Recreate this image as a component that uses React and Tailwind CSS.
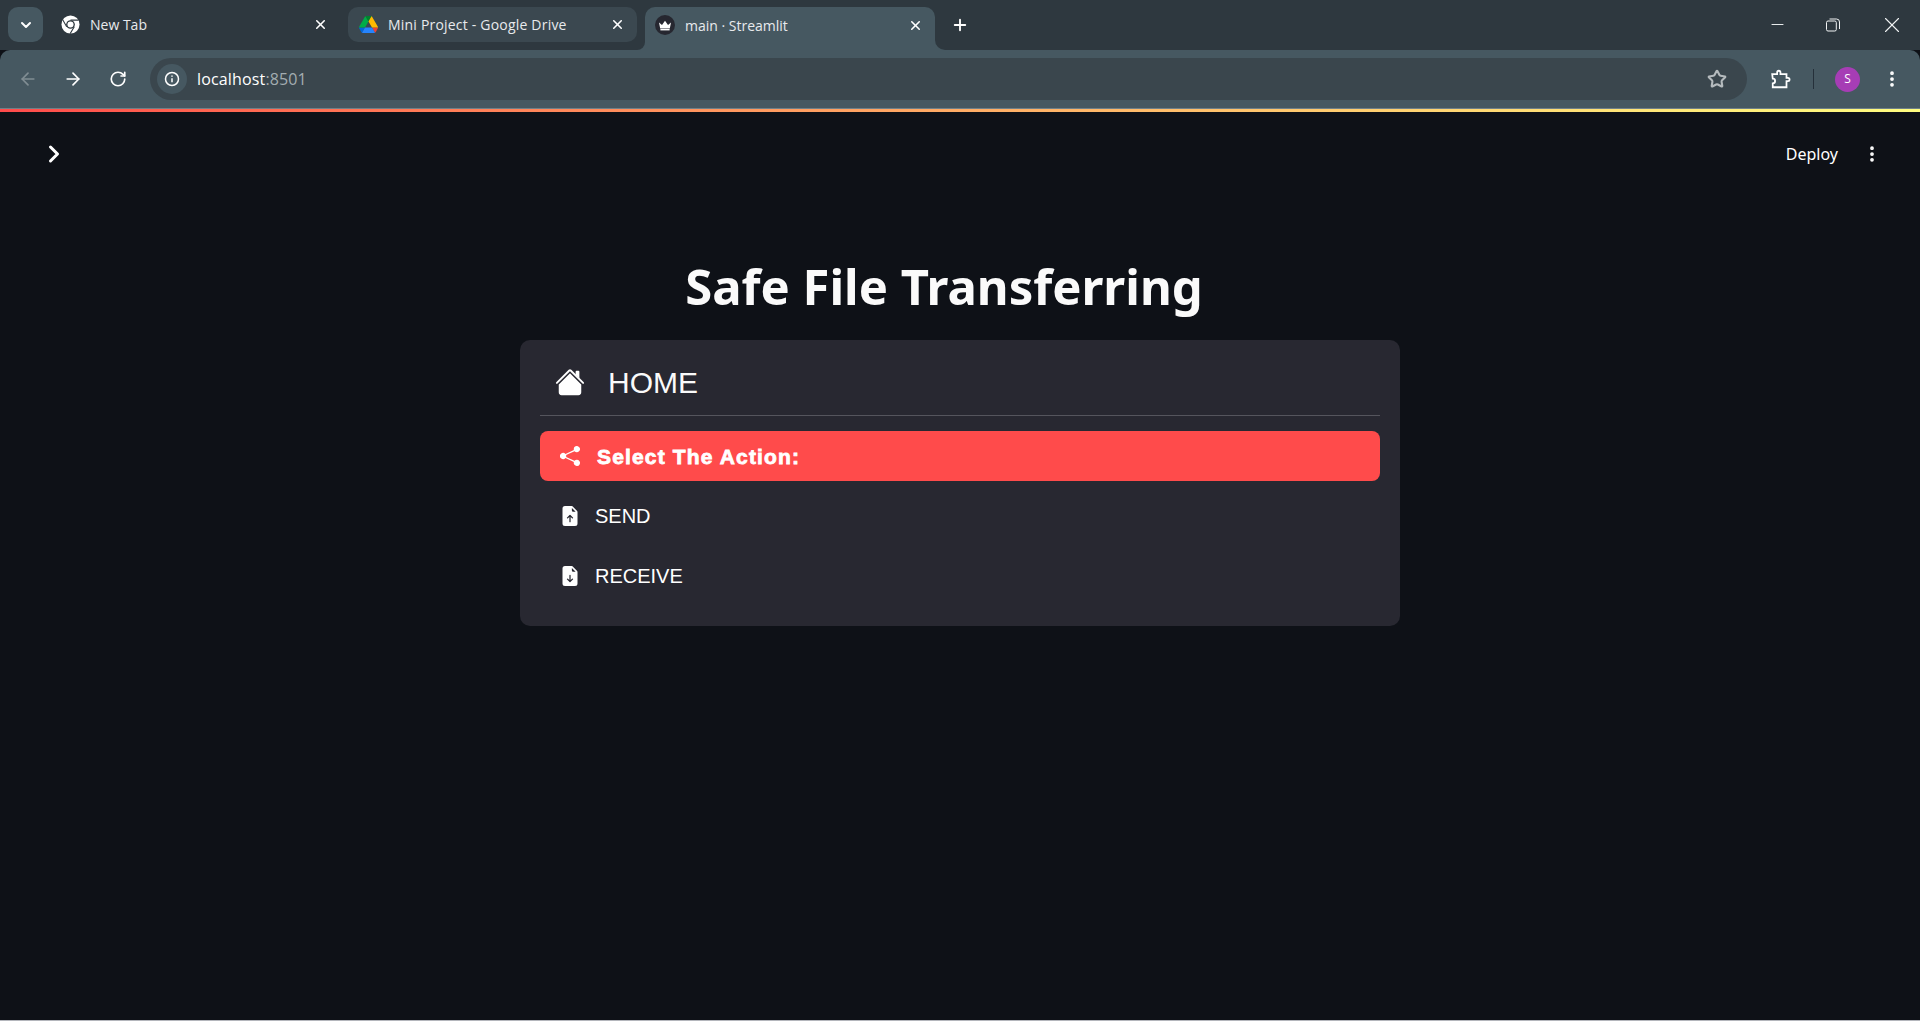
import React from "react";
import { X, Plus, ArrowLeft, ArrowRight, RotateCw, Star, ChevronRight, ChevronDown, Minus, EllipsisVertical } from "lucide-react";
import { BsShareFill, BsFileEarmarkArrowUpFill, BsFileEarmarkArrowDownFill } from "react-icons/bs";

const HouseIcon = () => (
  <svg viewBox="0 0 16 16" fill="currentColor" className="w-[30px] h-[30px]">
    <path fillRule="evenodd" d="M8 3.293l6 6V13.5a1.5 1.5 0 0 1-1.5 1.5h-9A1.5 1.5 0 0 1 2 13.5V9.293l6-6zm5-.793V6l-2-2V2.5a.5.5 0 0 1 .5-.5h1a.5.5 0 0 1 .5.5z" />
    <path fillRule="evenodd" d="M7.293 1.5a1 1 0 0 1 1.414 0l6.647 6.646a.5.5 0 0 1-.708.708L8 2.207 1.354 8.854a.5.5 0 1 1-.708-.708L7.293 1.5z" />
  </svg>
);

const ChromeIcon = () => (
  <svg viewBox="0 0 20 20" className="w-[19px] h-[19px]">
    <circle cx="10" cy="10" r="9.5" fill="#fff" />
    <circle cx="10" cy="10" r="4.6" fill="#2e383f" />
    <circle cx="10" cy="10" r="3.2" fill="#fff" />
    <path d="M10 5.4h8.6M6 12.3L1.8 5M14 12.3L9.6 19.6" stroke="#2e383f" strokeWidth="1.1" fill="none" />
  </svg>
);

const DriveIcon = () => (
  <svg viewBox="0 0 87.3 78" className="w-[19px] h-[17px]">
    <path d="M6.6 66.85l3.85 6.65c.8 1.4 1.95 2.5 3.3 3.3L27.5 53H0c0 1.55.4 3.1 1.2 4.5z" fill="#0066da" />
    <path d="M43.65 25L29.9 1.2c-1.35.8-2.5 1.9-3.3 3.3L1.2 48.5C.4 49.9 0 51.45 0 53h27.5z" fill="#00ac47" />
    <path d="M73.55 76.8c1.35-.8 2.5-1.9 3.3-3.3l1.6-2.75 7.65-13.25c.8-1.4 1.2-2.95 1.2-4.5H59.8l5.85 11.5z" fill="#ea4335" />
    <path d="M43.65 25L57.4 1.2C56.05.4 54.5 0 52.9 0H34.4c-1.6 0-3.15.45-4.5 1.2z" fill="#00832d" />
    <path d="M59.8 53H27.5L13.75 76.8c1.35.8 2.9 1.2 4.5 1.2h50.8c1.6 0 3.15-.45 4.5-1.2z" fill="#2684fc" />
    <path d="M73.4 26.5L60.7 4.5c-.8-1.4-1.95-2.5-3.3-3.3L43.65 25 59.8 53h27.45c0-1.55-.4-3.1-1.2-4.5z" fill="#ffba00" />
  </svg>
);

const CrownIcon = () => (
  <div className="w-5 h-5 rounded-full bg-[#262730] flex items-center justify-center">
    <svg viewBox="0 0 14 11" className="w-[14px] h-[11px]" fill="#fff">
      <path d="M1 2.5l3 2.5L7 .8 10 5l3-2.5-1.2 6H2.200z" />
      <rect x="2.4" y="9" width="9.2" height="1.4" />
    </svg>
  </div>
);

const PuzzleIcon = () => (
  <svg viewBox="0 0 20 20" className="w-[22px] h-[22px]" fill="none" stroke="#fff" strokeWidth="1.6">
    <path d="M2 5.500h4.500V4a1.500 1.500 0 0 1 3 0v1.500H15V9h1.300a1.500 1.500 0 0 1 0 3H15v5.500H2.500V14a2 2 0 0 0 0-4.300z" />
  </svg>
);

const RestoreIcon = () => (
  <svg viewBox="0 0 14 14" className="w-[14px] h-[14px]" fill="none" stroke="#f1f3f4" strokeWidth="1">
    <rect x="0.500" y="3" width="9.800" height="10" rx="1.500" />
    <path d="M3.500 1h7a3 3 0 0 1 3 3v7" />
  </svg>
);

function InactiveTab({ width, icon, title, className = "", titleClassName = "" }) {
  return (
    <div className={`flex items-center h-[35px] rounded-[10px] pl-[11px] pr-[12px] ${className}`} style={{ width }}>
      <div className="w-[19px] flex justify-center shrink-0">{icon}</div>
      <span className={`ml-[10px] flex-1 text-[14px] text-[#e8eaed] whitespace-nowrap ${titleClassName}`}>{title}</span>
      <X size={15} strokeWidth={2.5} className="text-white shrink-0" />
    </div>
  );
}

function OptionRow({ icon, label }) {
  return (
    <div className="h-[50px] flex items-center pl-[22px] text-[20px] text-white">
      <span className="w-[16px] flex justify-center">{icon}</span>
      <span className="ml-[17px]">{label}</span>
    </div>
  );
}

export default function App() {
  return (
    <div className="h-[1021px] overflow-hidden flex flex-col bg-[#0e1117] font-['Open_Sans',sans-serif]">
      {/* Tab strip */}
      <div className="h-[50px] bg-[#465861] shrink-0">
        <div className="h-full bg-[#2e383f] flex items-start pt-[7px] pl-[8px]">
          <div className="w-[35px] h-[35px] rounded-[10px] bg-[#465861] flex items-center justify-center">
            <ChevronDown size={16} strokeWidth={3} className="text-white" />
          </div>
          <InactiveTab width={290} className="ml-[7px] mr-[8px]" icon={<ChromeIcon />} title="New Tab" />
          <InactiveTab width={289} className="bg-[#3b4850]" icon={<DriveIcon />} title="Mini Project - Google Drive" titleClassName="tracking-[0.2px]" />
          <div className="relative ml-[8px] w-[290px] h-[43px] bg-[#465861] rounded-t-[10px] flex items-center pl-[10px] pr-[12px] pb-[7px]">
            {/* flared bottom corners */}
            <div className="absolute left-[-8px] bottom-0 w-2 h-2 bg-[#465861]">
              <div className="w-full h-full bg-[#2e383f] rounded-br-[8px]" />
            </div>
            <div className="absolute right-[-10px] bottom-0 w-[10px] h-[10px] bg-[#465861]">
              <div className="w-full h-full bg-[#2e383f] rounded-bl-[10px]" />
            </div>
            <CrownIcon />
            <span className="ml-[10px] flex-1 text-[14px] text-[#e8eaed] whitespace-nowrap">main · Streamlit</span>
            <X size={15} strokeWidth={2.5} className="text-white" />
          </div>
          <Plus size={18} strokeWidth={2.5} className="text-white ml-[16px] mt-[9px]" />
          <div className="flex-1" />
          <div className="flex items-center h-[35px] text-[#f1f3f4]">
            <Minus size={19} strokeWidth={1.2} className="mr-[39px]" />
            <div className="mr-[39px]"><RestoreIcon /></div>
            <X size={26} strokeWidth={1} className="mr-[15px]" />
          </div>
        </div>
      </div>

      {/* Toolbar */}
      <div className="h-[58px] bg-[#465861] shrink-0 flex items-center rounded-t-[10px] pl-[18px] pr-[16px]">
        <ArrowLeft size={20} className="text-[#808d93]" />
        <ArrowRight size={20} className="text-white ml-[25px]" />
        <RotateCw size={18} strokeWidth={2.200} className="text-white ml-[26px]" />
        <div className="ml-[23px] w-[1597px] h-[42px] rounded-full bg-[#3a464d] flex items-center pl-[7px] pr-[20px]">
          <div className="w-[30px] h-[30px] rounded-full bg-[#465861] flex items-center justify-center">
            <svg viewBox="0 0 16 16" className="w-4 h-4" fill="none" stroke="#fff" strokeWidth="1.500">
              <circle cx="8" cy="8" r="6.500" />
              <path d="M8 7.200v4M8 4.400v1.400" />
            </svg>
          </div>
          <span className="ml-[10px] flex-1 text-[16px] leading-none text-white tracking-[0.15px]">
            localhost<span className="text-[#a3adb1]">:8501</span>
          </span>
          <Star size={20} strokeWidth={2.5} className="text-[#b5bbbe]" />
        </div>
        <div className="ml-[23px]"><PuzzleIcon /></div>
        <div className="ml-[21px] w-px h-[20px] bg-[#25303a]" />
        <div className="ml-[21px] w-[25px] h-[25px] rounded-full bg-[#a63db5] flex items-center justify-center text-[12px] text-white">S</div>
        <EllipsisVertical size={20} strokeWidth={2.500} className="text-white ml-[22px]" />
      </div>

      <div className="h-px bg-[#6f8088] shrink-0" />
      <div className="h-[3px] bg-gradient-to-r from-[#ff4b4b] to-[#fffd80] shrink-0" />

      {/* Streamlit page */}
      <div className="flex-1 flex flex-col">
        <div className="h-[84px] flex items-center justify-between pl-[40px] pr-[38px]">
          <ChevronRight size={28} strokeWidth={2.6} className="text-white" />
          <div className="flex items-center text-white">
            <span className="text-[16px] font-['Noto_Sans',sans-serif]">Deploy</span>
            <EllipsisVertical size={20} strokeWidth={2.500} className="ml-[24px]" />
          </div>
        </div>
        <h1 className="pr-[32px] text-center text-[49px] leading-[70px] font-bold text-[#fafafa] font-['Noto_Sans',sans-serif] mt-[55px]">
          Safe File Transferring
        </h1>
        <div className="mt-[19px] mx-auto w-[880px] h-[286px] rounded-[10px] bg-[#282831] px-[20px] font-['Liberation_Sans',sans-serif]">
          <div className="h-[66px] flex items-center pl-[15px] pt-[9px] text-white border-b border-[#55555d] box-content">
            <HouseIcon />
            <span className="ml-[23px] text-[30px] text-[#fafafa]">HOME</span>
          </div>
          <div className="mt-[15px] h-[50px] rounded-[8px] bg-[#ff4b4b] flex items-center pl-[20px] text-white">
            <BsShareFill size={20} />
            <span className="ml-[17px] pt-[2px] text-[21px] font-bold tracking-[1.15px] [-webkit-text-stroke:0.8px_white]">Select The Action:</span>
          </div>
          <div className="mt-[10px] flex flex-col gap-[10px]">
            <OptionRow icon={<BsFileEarmarkArrowUpFill size={20} className="shrink-0" />} label="SEND" />
            <OptionRow icon={<BsFileEarmarkArrowDownFill size={20} className="shrink-0" />} label="RECEIVE" />
          </div>
        </div>
      </div>
      <div className="h-px bg-[#b4b6bc] shrink-0" />
    </div>
  );
}
